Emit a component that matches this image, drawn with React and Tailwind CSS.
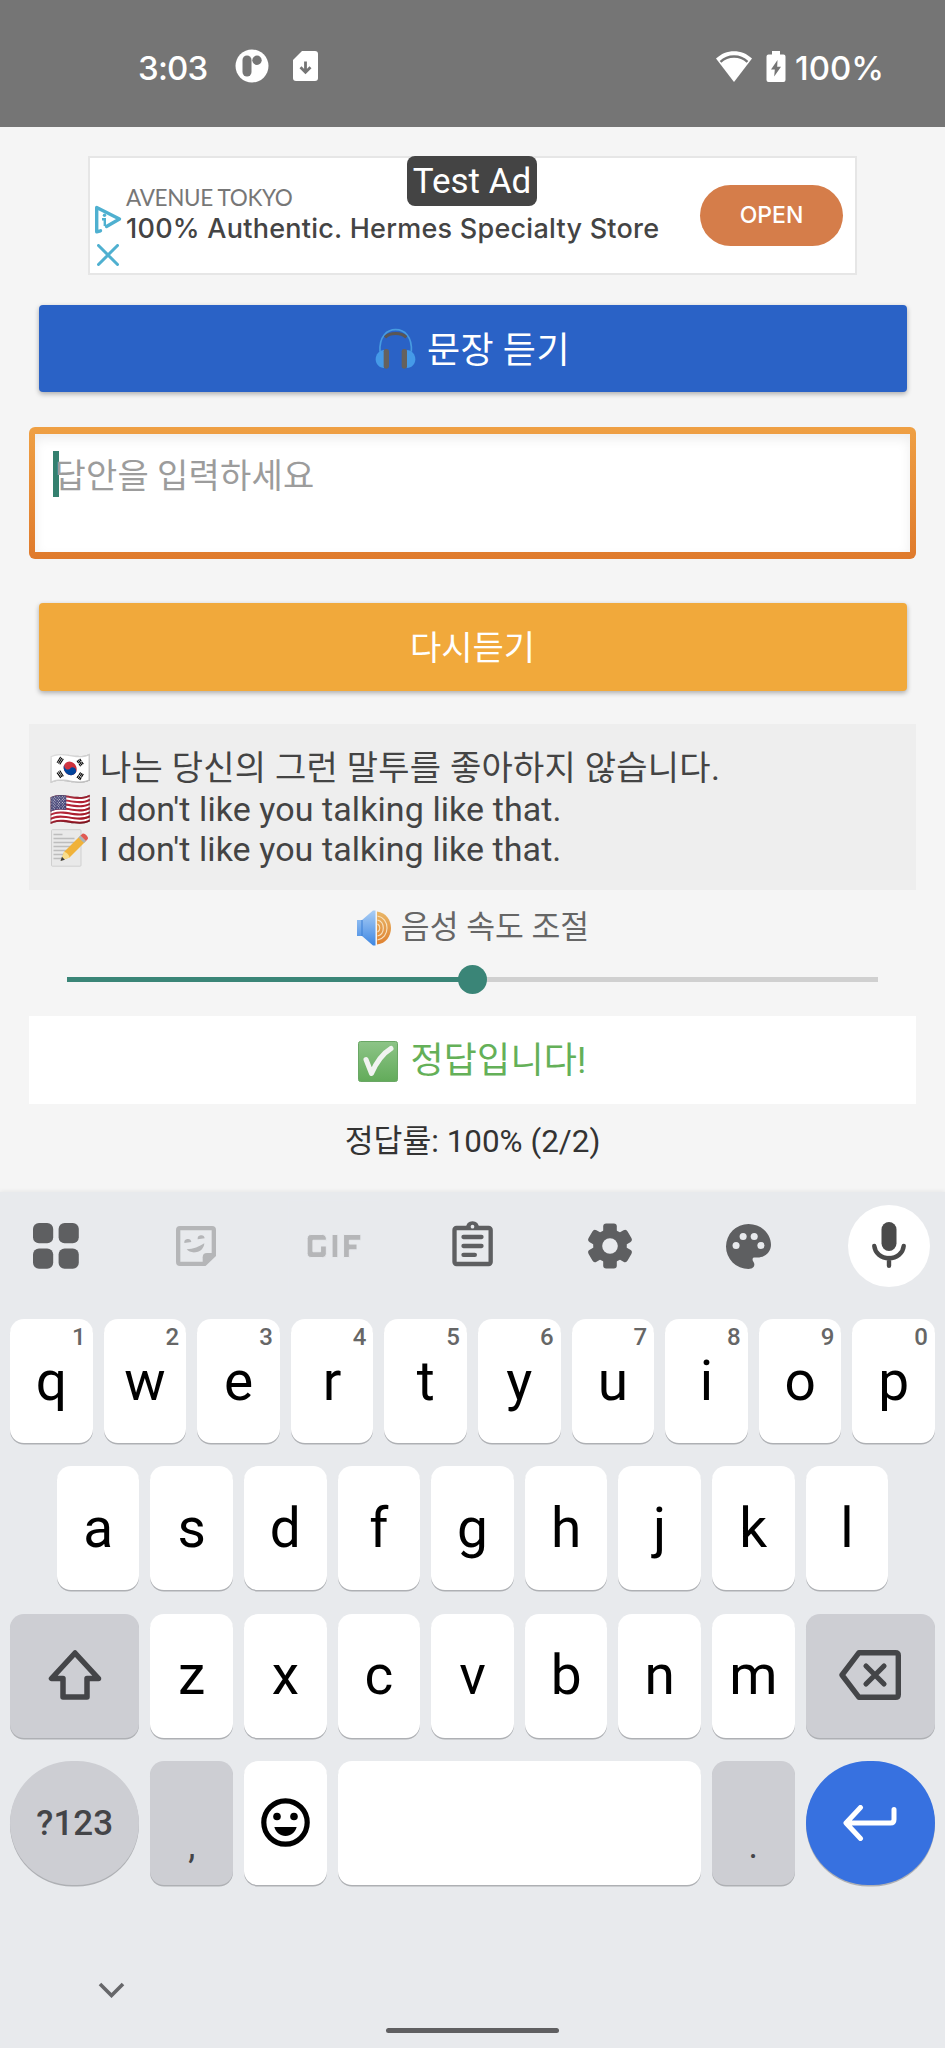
import { MdGif } from "react-icons/md";

function StatusBar() {
  return (
    <header className="flex h-[127px] items-start bg-[#757575] pt-[48px] text-white">
      <div className="flex h-9 items-center pl-[138px]">
        <span className="w-[97px] font-[Inter,sans-serif] text-[33px] font-medium leading-9 tracking-[-0.8px] pt-[4px]">3:03</span>
        <svg className="h-[34px] w-[34px]" viewBox="0 0 34 34">
          <circle cx="17" cy="17" r="16.5" fill="#fff" />
          <rect x="7.5" y="6.5" width="9" height="21" rx="4.5" fill="#757575" />
          <circle cx="22" cy="11.3" r="4.7" fill="#757575" />
        </svg>
        <svg className="ml-[24px] h-[30px] w-[25px]" viewBox="0 0 25 30">
          <path d="M9 0H22a3 3 0 0 1 3 3V27a3 3 0 0 1-3 3H3a3 3 0 0 1-3-3V9Z" fill="#fff" />
          <path d="M12.5 10.5V21M7.5 16.3l5 5 5-5" fill="none" stroke="#757575" strokeWidth="2.8" />
        </svg>
      </div>
      <div className="ml-auto flex h-9 items-center pr-[62px]">
        <svg className="h-[31px] w-[36px]" viewBox="0 0 36 31">
          <path d="M0 7.5C10-2.3 26-2.3 36 7.5L18 31Z" fill="#fff" />
          <path d="M4.5 10.8C12 3.8 24 3.8 31.5 10.8" fill="none" stroke="#757575" strokeWidth="2.4" />
        </svg>
        <svg className="ml-[14px] h-[31px] w-[20px]" viewBox="0 0 20 31">
          <path d="M6 0h8v3.5h3.500a2 2 0 0 1 2 2V29a2 2 0 0 1-2 2H2.500a2 2 0 0 1-2-2V5.500a2 2 0 0 1 2-2H6Z" fill="#fff" />
          <path d="M11.500 9L5 18.500h3.800L8.200 25.500 15 15.800h-3.800Z" fill="#757575" />
        </svg>
        <span className="ml-[9px] w-[88px] whitespace-nowrap pt-[4px] font-[Inter,sans-serif] text-[33px] font-medium leading-9">100%</span>
      </div>
    </header>
  );
}

function AdBanner() {
  return (
    <section className="relative mx-[88px] mt-[29px] flex h-[119px] border-2 border-[#e6e6e6] bg-white">
      <div className="flex w-[36px] flex-col pl-[4px] pt-[47px]">
        <svg className="h-[29px] w-[28px]" viewBox="0 0 28 29">
          <path d="M6.500 25.800L2.700 26.800V2.500L25.500 14 12.500 21.500" fill="none" stroke="#4fb0d0" strokeWidth="3.400" strokeLinejoin="round" strokeLinecap="round" />
          <circle cx="10.500" cy="10.300" r="1.700" fill="#4fb0d0" />
          <path d="M8 14.200H10.800V21" fill="none" stroke="#4fb0d0" strokeWidth="2.400" />
        </svg>
        <svg className="ml-[3px] mt-[10px] h-[22px] w-[22px]" viewBox="0 0 22 22">
          <path d="M1.500 1.500L20.500 20.500M20.500 1.500L1.500 20.500" stroke="#4fb0d0" strokeWidth="3" strokeLinecap="round" />
        </svg>
      </div>
      <div className="flex-1 whitespace-nowrap pt-[25px]">
        <div className="font-[Lato,sans-serif] text-[22.500px] leading-[30px] tracking-[-0.35px] text-[#777]">AVENUE TOKYO</div>
        <div className="font-[Inter,sans-serif] text-[27px] font-medium leading-[32px] tracking-[0.25px] text-[#444]">
          100% Authentic. Hermes Specialty Store
        </div>
      </div>
      <button className="mr-[12px] mt-[27px] h-[61px] w-[143px] rounded-full bg-[#d57d4a] pb-[1px] font-[Inter,sans-serif] text-[23px] font-medium text-white">
        OPEN
      </button>
      <div className="absolute left-[317px] top-[-2px] flex h-[50px] w-[130px] items-center justify-center rounded-[8px] bg-[#444] pt-[1px] text-[35px] leading-none text-white">
        Test Ad
      </div>
    </section>
  );
}

function Headphones() {
  return (
    <svg className="h-[41px] w-[41px]" viewBox="112 57 123 123">
      <path d="M127 128C124 82 148 62 174 62s50 20 47 66" fill="none" stroke="#479be0" strokeWidth="5" />
      <path d="M142 85C158 70 190 70 206 85" fill="none" stroke="#5a5653" strokeWidth="9" />
      <path d="M140 123c-16 0-26 14-26 28s10 26 26 26Z" fill="#459ae8" />
      <path d="M207 123c16 0 26 14 26 28s-10 26-26 26Z" fill="#459ae8" />
      <rect x="138" y="120" width="16" height="59" rx="7" fill="#65615d" />
      <rect x="192" y="120" width="16" height="59" rx="7" fill="#65615d" />
    </svg>
  );
}

function Speaker() {
  return (
    <svg className="h-[36px] w-[36px]" viewBox="0 0 36 36">
      <defs>
        <linearGradient id="cone" x1="0" y1="0" x2="0" y2="1">
          <stop offset="0" stopColor="#a9cdf5" />
          <stop offset="1" stopColor="#3f87e2" />
        </linearGradient>
        <linearGradient id="wave" x1="0" y1="0" x2="0" y2="1">
          <stop offset="0" stopColor="#e9b768" />
          <stop offset="1" stopColor="#df8130" />
        </linearGradient>
      </defs>
      <path d="M1 10h5L17 .500h2.500v35H17L6 26H1Z" fill="url(#cone)" />
      <path d="M6 10v16" stroke="#3b7fd4" strokeWidth="1" />
      <path d="M21 1.500c9 1 14 8.500 14 16.500s-5 15.500-14 16.500Z" fill="url(#wave)" />
      <path d="M21.500 6c6 1 9.500 6 9.500 12s-3.500 11-9.500 12M21.500 10c4 1 5.800 4.500 5.800 8s-1.800 7-5.800 8M21.500 14c1.800 1 2.300 2.500 2.300 4s-.5 3-2.300 4" fill="none" stroke="#f8e3c2" strokeWidth="1.100" />
    </svg>
  );
}

function CheckBox() {
  return (
    <svg className="h-[41px] w-[40px]" viewBox="0 0 40 41">
      <defs>
        <linearGradient id="green" x1="0" y1="0" x2="0" y2="1">
          <stop offset="0" stopColor="#8dc487" />
          <stop offset="1" stopColor="#62ab5a" />
        </linearGradient>
      </defs>
      <rect x=".500" y=".500" width="39" height="40" rx="2" fill="url(#green)" stroke="#6aa765" />
      <path d="M8 18.500L13.500 32.500C18 22 24 13 33 7.500" fill="none" stroke="#f1f3f1" strokeWidth="5" strokeLinecap="round" strokeLinejoin="round" />
    </svg>
  );
}

function Memo() {
  return (
    <svg className="h-[38px] w-[41px]" viewBox="0 0 41 38">
      <rect x="2.500" y=".700" width="29.500" height="36.500" rx="1" fill="#e9e9e9" stroke="#cfcfcf" />
      <path d="M4.500 5.500h9M4.500 9.500h21M4.500 13.500h21M4.500 17.500h17M4.500 21.500h14M4.500 25.500h10M4.500 29.500h8" stroke="#bdbdbd" strokeWidth="1.300" />
      <path d="M12 31.500l3-8.500L31.500 6.500l5.500 5.500L20.500 28.500Z" fill="#f0b23a" />
      <path d="M12 31.500l3-8.500c2.500 0 5 2.500 5.500 5.500Z" fill="#f8dd8c" />
      <path d="M11.500 32l1.400-4.300 3 3Z" fill="#3c3c3c" />
      <path d="M29.500 8.500l2-2 5.500 5.500-2 2Z" fill="#a9b4b9" />
      <path d="M31.500 6.500l2-1.800c1.500-1.300 6.500 3 5.300 5.300L37 12Z" fill="#e05a54" />
    </svg>
  );
}

function GridIcon() {
  return (
    <svg className="h-[46px] w-[46px]" viewBox="0 0 46 46" fill="#5e5f61">
      <rect width="20.200" height="20.200" rx="6" />
      <rect x="25.600" width="20.200" height="20.200" rx="6" />
      <rect y="25.600" width="20.200" height="20.200" rx="6" />
      <rect x="25.600" y="25.600" width="20.200" height="20.200" rx="6" />
    </svg>
  );
}

function StickerIcon() {
  return (
    <svg className="h-[40px] w-[40px]" viewBox="528 138 120 120">
      <path d="M641.500 225V150q0-5.500-5.500-5.500H540q-5.500 0-5.500 5.500v96q0 5.500 5.500 5.500h74Z" fill="none" stroke="#b5b6b8" strokeWidth="13" />
      <path d="M608 256V232q0-13 13-13h25L612 256Z" fill="#b5b6b8" />
      <path d="M553 189a10.500 10.500 0 0 1 21-3ZM593 178a10.500 10.500 0 0 1 21-3Z" fill="#b5b6b8" />
      <path d="M560 208C580 207 598 200 613 190 612 206 600 216 586 217 574 218 565 214 560 208Z" fill="#b5b6b8" />
    </svg>
  );
}

function ClipboardIcon() {
  return (
    <svg className="h-[46px] w-[41px]" viewBox="1356 123 122 138">
      <rect x="1363" y="144" width="108.500" height="108" rx="6" fill="none" stroke="#5e5f61" strokeWidth="13" />
      <path d="M1390 171H1444M1390 198H1444M1390 224.500H1424" stroke="#5e5f61" strokeWidth="13" strokeLinecap="round" />
      <path d="M1396 146q3-22 21-22t21 22Z" fill="#5e5f61" />
      <circle cx="1417" cy="140" r="5.500" fill="#e8eaed" />
    </svg>
  );
}

function GearIcon() {
  return (
    <svg className="h-[46px] w-[46px]" viewBox="-23 -23 46 46" fill="#5e5f61">
      <circle r="16.800" />
      <rect x="-6.800" y="-22.500" width="13.600" height="45" rx="3" />
      <rect x="-6.800" y="-22.500" width="13.600" height="45" rx="3" transform="rotate(60)" />
      <rect x="-6.800" y="-22.500" width="13.600" height="45" rx="3" transform="rotate(120)" />
      <circle r="7.800" fill="#e8eaed" />
    </svg>
  );
}

function PaletteIcon() {
  return (
    <svg className="h-[45px] w-[45px]" viewBox="763 130 134 134">
      <path d="M830 264A67 67 0 0 1 763 197 67 67 0 0 1 830 130C867 130 897 158 897 192 897 213 880 230 857 230H846C841 232 841 237 845 243 851 252 846 264 830 264Z" fill="#5e5f61" />
      <g fill="#e8eaed">
        <circle cx="793" cy="194" r="10.500" />
        <circle cx="814" cy="167" r="10.500" />
        <circle cx="847" cy="167" r="10.500" />
        <circle cx="867" cy="194" r="10.500" />
      </g>
    </svg>
  );
}

function MicIcon() {
  return (
    <svg className="h-[46px] w-[34px]" viewBox="0 0 34 46">
      <rect x="9.500" y="0" width="15" height="29" rx="7.500" fill="#4a4a4a" />
      <path d="M2.300 24C3 31 9 36.300 17 36.300S31 31 31.700 24M17 36V43.800" fill="none" stroke="#4a4a4a" strokeWidth="4.400" strokeLinecap="round" />
    </svg>
  );
}

function Toolbar() {
  return (
    <div className="flex h-[127px] items-start px-[8px] pt-[13px]">
      <div className="flex h-[82px] w-[96px] items-center justify-center"><GridIcon /></div>
      <div className="ml-[42px] flex h-[82px] w-[100px] items-center justify-center"><StickerIcon /></div>
      <div className="ml-[38px] flex h-[82px] w-[100px] items-center justify-center">
        <MdGif size={92} color="#b5b6b8" stroke="#e8eaed" strokeWidth={0.25} />
      </div>
      <div className="ml-[38px] flex h-[82px] w-[100px] items-center justify-center pb-[4px]"><ClipboardIcon /></div>
      <div className="ml-[38px] flex h-[82px] w-[100px] items-center justify-center"><GearIcon /></div>
      <div className="ml-[38px] flex h-[82px] w-[100px] items-center justify-center"><PaletteIcon /></div>
      <div className="ml-[50px] flex h-[82px] w-[82px] shrink-0 items-center justify-center rounded-full bg-white pb-[2px]"><MicIcon /></div>
    </div>
  );
}

const LIGHT_KEY = "relative h-[124px] rounded-[14px] bg-white text-center text-[55px] leading-[119px] text-black shadow-[0_1.500px_0_#aeb0b4]";
const DARK_KEY = "flex h-[124px] items-center justify-center rounded-[14px] bg-[#cdced3] shadow-[0_1.500px_0_#aeb0b4]";

function Key({ label, hint }) {
  return (
    <button className={`${LIGHT_KEY} w-[82.500px]`}>
      {hint && <span className="absolute right-[7px] top-[5px] text-[24px] font-medium leading-[26px] text-[#666]">{hint}</span>}
      {label}
    </button>
  );
}

function Keyboard() {
  return (
    <section className="h-[856px] bg-[#e8eaed] shadow-[0_-1px_4px_rgba(0,0,0,0.06)]">
      <Toolbar />
      <div className="flex flex-col gap-[23.300px]">
        <div className="flex justify-center gap-[11.100px]">
          {[..."qwertyuiop"].map((c, i) => <Key key={c} label={c} hint={String((i + 1) % 10)} />)}
        </div>
        <div className="flex justify-center gap-[11.100px]">
          {[..."asdfghjkl"].map((c) => <Key key={c} label={c} />)}
        </div>
        <div className="flex justify-center gap-[11.100px]">
          <button className={`${DARK_KEY} w-[129.300px]`}>
            <svg className="h-[52px] w-[54px]" viewBox="0 0 54 52">
              <path d="M27 3L3.500 28.500H15V47H39V28.500H50.500Z" fill="none" stroke="#444548" strokeWidth="5.500" strokeLinejoin="round" />
            </svg>
          </button>
          {[..."zxcvbnm"].map((c) => <Key key={c} label={c} />)}
          <button className={`${DARK_KEY} w-[129.300px] pb-[1px]`}>
            <svg className="h-[50px] w-[62px]" viewBox="0 0 62 50">
              <path d="M20 2.700H56.500q2.800 0 2.800 2.800V44.500q0 2.800-2.800 2.800H20L3 25Z" fill="none" stroke="#444548" strokeWidth="5.400" strokeLinejoin="round" />
              <path d="M27 16L45 34M45 16L27 34" stroke="#444548" strokeWidth="5.200" strokeLinecap="round" />
            </svg>
          </button>
        </div>
        <div className="flex justify-center gap-[11.100px]">
          <button className="h-[124px] w-[129.300px] rounded-[62px] bg-[#cdced3] pt-[2px] text-[35px] font-medium text-[#444548] shadow-[0_1.500px_0_#aeb0b4]">?123</button>
          <button className={`${DARK_KEY} w-[82.500px] pt-[46px] text-[36px] text-[#444548]`}>,</button>
          <button className="flex h-[124px] w-[82.500px] items-center justify-center rounded-[14px] bg-white shadow-[0_1.500px_0_#aeb0b4]">
            <svg className="h-[49px] w-[49px]" viewBox="0 0 49 49">
              <circle cx="24.500" cy="24.500" r="21.700" fill="none" stroke="#000" strokeWidth="5.200" />
              <circle cx="16" cy="18.500" r="3.800" />
              <circle cx="33" cy="18.500" r="3.800" />
              <path d="M13.300 29H35.700C34 34.500 30 38 24.500 38S15 34.500 13.300 29Z" />
            </svg>
          </button>
          <button aria-label="Space" className="h-[124px] w-[363.300px] rounded-[14px] bg-white shadow-[0_1.500px_0_#aeb0b4]" />
          <button className={`${DARK_KEY} w-[82.500px] pt-[46px] text-[36px] text-[#444548]`}>.</button>
          <button className="flex h-[124px] w-[129.300px] items-center justify-center rounded-[62px] bg-[#3771e0] shadow-[0_1.500px_0_#aeb0b4]">
            <svg className="h-[36px] w-[54px]" viewBox="0 0 54 36">
              <path d="M17.500 2.500L3 18 17.500 33.500M4 18H47.500q3.500 0 3.500-3.500V4.500" fill="none" stroke="#fff" strokeWidth="5" strokeLinecap="round" strokeLinejoin="round" />
            </svg>
          </button>
        </div>
      </div>
      <div className="flex pl-[98px] pt-[97px]">
        <svg className="h-[16px] w-[27px]" viewBox="0 0 27 16">
          <path d="M2 2L13.500 13.500 25 2" fill="none" stroke="#66676a" strokeWidth="3.600" />
        </svg>
      </div>
      <div className="mx-auto mt-[30px] h-[5px] w-[173px] rounded-full bg-[#5f5f61]" />
    </section>
  );
}

export default function App() {
  return (
    <main className="flex h-[2048px] w-[945px] flex-col overflow-hidden bg-[#f5f5f5] font-[Roboto,'Noto_Sans_CJK_KR',sans-serif]">
      <StatusBar />
      <AdBanner />
      <button className="mx-[38.500px] mt-[29.500px] flex h-[87.500px] shrink-0 items-center justify-center rounded-[4px] bg-[#2a62c6] text-[36px] leading-[44px] text-white shadow-[0_2px_5px_rgba(0,0,0,0.3)]">
        <Headphones />
        <span className="ml-[11px] pb-[2px] font-['Noto_Sans_CJK_KR',sans-serif] tracking-[0.500px]">문장 듣기</span>
      </button>
      <div className="mx-[29px] mt-[34.500px] h-[132px] shrink-0 rounded-[6px] bg-gradient-to-b from-[#efa044] to-[#df7a2c] px-[6px] py-[7px]">
        <div className="flex h-full items-start bg-white pl-[18px] pt-[17px] shadow-[inset_0_5px_12px_rgba(0,0,0,0.07)]">
          <div className="h-[46px] w-[5.500px] bg-[#34806f]" />
          <span className="-ml-[4px] font-['Noto_Sans_CJK_KR',sans-serif] text-[34px] leading-[45px] tracking-[0.250px] text-[#9c9c9c]">답안을 입력하세요</span>
        </div>
      </div>
      <button className="mx-[38.500px] mt-[44.500px] h-[87.500px] shrink-0 rounded-[4px] bg-[#f1a93b] pt-[2px] text-[34px] leading-[44px] text-white shadow-[0_2px_5px_rgba(0,0,0,0.3)]">
        다시듣기
      </button>
      <section className="mx-[29px] mt-[33.500px] h-[166px] shrink-0 whitespace-nowrap bg-[#eee] pl-[20px] pt-[22px] text-[34px] leading-[40px] tracking-[0.080px] text-[#444]">
        <p className="h-[43px] leading-[44px] tracking-[0.250px]">🇰🇷 나는 당신의 그런 말투를 좋아하지 않습니다.</p>
        <p className="h-[40px]">🇺🇸 I don't like you talking like that.</p>
        <p className="flex h-[40px]"><Memo /><span className="ml-[9.500px]">I don't like you talking like that.</span></p>
      </section>
      <div className="mt-[16px] flex h-[44px] shrink-0 items-center justify-center text-[31.300px] leading-[44px] text-[#666]">
        <Speaker />
        <span className="ml-[9px]">음성 속도 조절</span>
      </div>
      <div className="mx-[67px] mt-[15px] flex h-[29px] shrink-0 items-center">
        <div className="h-[5px] flex-1 bg-[#3a8577]" />
        <div className="relative z-10 -mx-[14.500px] h-[29px] w-[29px] rounded-full bg-[#3a8577]" />
        <div className="h-[5px] flex-1 bg-[#d0d0d0]" />
      </div>
      <div className="mx-[29px] mt-[22px] flex h-[88px] shrink-0 items-center justify-center bg-white pt-[2px] text-[36px] leading-[44px] tracking-[0.200px] text-[#64b058]">
        <CheckBox />
        <span className="ml-[12px]">정답입니다!</span>
      </div>
      <div className="mt-[16px] h-[44px] shrink-0 text-center text-[31.400px] leading-[44px] text-[#333]">정답률: 100% (2/2)</div>
      <div className="mt-auto shrink-0"><Keyboard /></div>
    </main>
  );
}
